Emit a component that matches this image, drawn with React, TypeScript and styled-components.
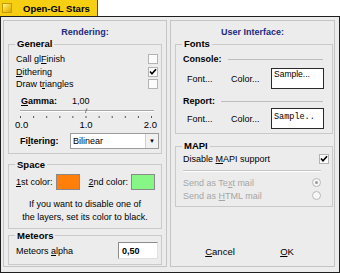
import styled, { createGlobalStyle } from "styled-components";

const GlobalStyle = createGlobalStyle`
  html, body { margin: 0; padding: 0; background: #fff; }
  body {
    font-family: "Liberation Sans", Arial, sans-serif;
    font-size: 9px;
    color: #000;
  }
  * { box-sizing: border-box; }
`;

const Window = styled.div`
  width: 340px;
  height: 273px;
  display: flex;
  flex-direction: column;
`;

const TabStrip = styled.div`
  height: 17px;
  display: flex;
  background: #fff;
  border-bottom: 1px solid #1f1f1f;
`;

const Tab = styled.div`
  width: 98px;
  background: #f6cf12;
  border-right: 1px solid #5c4c00;
  display: flex;
  align-items: center;
  gap: 11px;
  padding-left: 2px;
  font-weight: 700;
  font-size: 9.5px;
`;

const TabIcon = styled.span`
  width: 10px;
  height: 10px;
  background: linear-gradient(135deg, #fff6b0 0%, #f5d22a 45%, #d9a800 100%);
  border: 1px solid #c89a00;
`;

const Frame = styled.div`
  flex: 1;
  background: #ececec;
  border: 1px solid #1f1f1f;
  border-top: none;
  padding: 3px 4px 5px 2px;
  display: grid;
  grid-template-columns: 164px 165px;
  column-gap: 3px;
`;

const Panel = styled.div`
  border: 1px solid #c4c4c4;
  display: flex;
  flex-direction: column;
`;

const PanelTitle = styled.div`
  margin-top: 5px;
  height: 12px;
  line-height: 12px;
  text-align: center;
  font-weight: 700;
  color: #1d2a80;
`;

const Group = styled.fieldset<{ $top?: number; $right?: number }>`
  margin: ${(p) => p.$top ?? 0}px ${(p) => p.$right ?? 4}px 0 4px;
  padding: 0 2px 4px 7px;
  border: 1px solid #c9c9c9;
  min-width: 0;
`;

const Legend = styled.legend`
  padding: 0 2px;
  margin-left: -1px;
  font-weight: 700;
  font-size: 9.5px;
  line-height: 12px;
`;

const Row = styled.div<{ $h?: number }>`
  height: ${(p) => p.$h ?? 12.5}px;
  display: flex;
  align-items: center;
  justify-content: space-between;
  white-space: nowrap;
`;

const Box = styled.span`
  width: 10px;
  height: 10px;
  background: #fbfbfb;
  border: 1px solid #b3b3b3;
  display: inline-flex;
  align-items: center;
  justify-content: center;
  margin-right: 1px;
`;

const Check = ({ on }: { on?: boolean }) => (
  <Box>
    {on && (
      <svg width="8" height="8" viewBox="0 0 8 8">
        <path d="M1 3.5 L3 5.8 L7 1.2" stroke="#000" strokeWidth="1.6" fill="none" />
      </svg>
    )}
  </Box>
);

const GammaRow = styled.div`
  margin-top: 4px;
  padding-left: 5px;
  height: 12px;
  display: flex;
  align-items: center;
  gap: 15px;
  font-weight: 700;
`;

const Value = styled.span`
  font-weight: 400;
`;

const SliderArt = styled.svg`
  display: block;
  margin: 1px 0 0 4px;
`;

const ScaleLabels = styled.div`
  display: flex;
  justify-content: space-between;
  padding-right: 2px;
  margin-left: -1px;
  height: 11px;
  line-height: 11px;
  font-size: 9.5px;
`;

const FilterRow = styled.div`
  margin-top: 3px;
  padding-left: 4px;
  display: flex;
  align-items: center;
  justify-content: space-between;
  font-weight: 700;
`;

const Select = styled.div`
  width: 89px;
  height: 16px;
  background: #fff;
  border: 1px solid #9c9c9c;
  display: flex;
  align-items: center;
  justify-content: space-between;
  padding-left: 2px;
  font-weight: 400;
`;

const SelectButton = styled.span`
  width: 13px;
  height: 14px;
  background: #f1f1f1;
  border-left: 1px solid #d0d0d0;
  display: flex;
  align-items: center;
  justify-content: center;
  font-size: 6px;
`;

const ColorRow = styled.div`
  margin-top: 3px;
  display: flex;
  align-items: center;
  height: 16px;
  white-space: nowrap;
`;

const Swatch = styled.span<{ $color: string; $last?: boolean }>`
  flex-shrink: 0;
  width: 24px;
  height: 16px;
  background: ${(p) => p.$color};
  border: 1px solid #8a8a8a;
  margin: 0 ${(p) => (p.$last ? 0 : 9)}px 0 3px;
`;

const Note = styled.div`
  margin-top: 8px;
  text-align: center;
  line-height: 13px;
  padding-right: 5px;
`;

const AlphaInput = styled.span`
  width: 40px;
  height: 17px;
  background: #fff;
  border: 1px solid #8c8c8c;
  border-right-color: #e0e0e0;
  border-bottom-color: #e0e0e0;
  display: flex;
  align-items: center;
  padding-left: 3px;
  font-weight: 700;
  margin-right: 1px;
`;

const SubHeading = styled.div`
  height: 12px;
  display: flex;
  align-items: center;
  gap: 6px;
  font-weight: 700;
  padding-right: 7px;
  &::after {
    content: "";
    flex: 1;
    border-top: 1px solid #bdbdbd;
    margin-top: 1px;
  }
`;

const FontRow = styled.div<{ $top: number }>`
  margin-top: ${(p) => p.$top}px;
  height: 21px;
  display: flex;
  align-items: center;
  padding-left: 4px;
`;

const FontLink = styled.span<{ $w: number }>`
  width: ${(p) => p.$w}px;
`;

const Sample = styled.span<{ $mono?: boolean }>`
  width: 53px;
  height: 21px;
  background: #fff;
  border: 1px solid #2a2a2a;
  padding: 1px 0 0 2px;
  font-family: ${(p) => (p.$mono ? '"Liberation Mono", monospace' : '"Liberation Sans", Arial, sans-serif')};
  font-size: 8.5px;
  line-height: ${(p) => (p.$mono ? 14 : 9)}px;
  white-space: nowrap;
  overflow: hidden;
`;

const Separator = styled.div`
  margin: 4px 9px 4px 0;
  border-top: 1px solid #c4c4c4;
  border-bottom: 1px solid #fff;
`;

const Disabled = styled(Row)`
  color: #a6a6a6;
`;

const Radio = styled.span<{ $on?: boolean }>`
  width: 9px;
  height: 9px;
  border-radius: 50%;
  border: 1px solid #b8b8b8;
  background: #f7f7f7;
  margin-right: 9px;
  display: flex;
  align-items: center;
  justify-content: center;
  &::after {
    content: "";
    width: 3px;
    height: 3px;
    border-radius: 50%;
    background: ${(p) => (p.$on ? "#9a9a9a" : "transparent")};
  }
`;

const ButtonBar = styled.div`
  margin-top: auto;
  margin-bottom: 8px;
  display: flex;
  justify-content: flex-end;
  padding-right: 17px;
  gap: 7px;
`;

const Button = styled.button`
  width: 60px;
  height: 14px;
  padding: 0;
  background: transparent;
  border: none;
  font: inherit;
  font-size: 9.5px;
  color: #000;
`;

export default function App() {
  const ticks = Array.from({ length: 11 }, (_, i) => 1 + i * 13.1);
  return (
    <Window>
      <GlobalStyle />
      <TabStrip>
        <Tab>
          <TabIcon />
          Open-GL Stars
        </Tab>
      </TabStrip>
      <Frame>
        <Panel>
          <PanelTitle>Rendering:</PanelTitle>
          <Group>
            <Legend>General</Legend>
            <div style={{ height: 3 }} />
            <Row>
              <span>
                Call gl<u>F</u>inish
              </span>
              <Check />
            </Row>
            <Row>
              <span>
                <u>D</u>ithering
              </span>
              <Check on />
            </Row>
            <Row>
              <span>
                Draw t<u>r</u>iangles
              </span>
              <Check />
            </Row>
            <GammaRow>
              <span>
                <u>G</u>amma:
              </span>
              <Value>1,00</Value>
            </GammaRow>
            <SliderArt width="136" height="11" viewBox="0 0 136 11">
              <line x1="0.5" y1="2" x2="0.5" y2="4" stroke="#9a9a9a" />
              <line x1="133.5" y1="2" x2="133.5" y2="4" stroke="#9a9a9a" />
              <line x1="0" y1="2.5" x2="134" y2="2.5" stroke="#a8a8a8" />
              <line x1="0" y1="3.5" x2="134" y2="3.5" stroke="#fff" />
              <path d="M65.5 5 L66.5 1 L67.5 1" stroke="#777" fill="none" />
              {ticks.map((x) => (
                <rect key={x} x={x - 1} y={8} width={1} height={2} fill="#555" />
              ))}
            </SliderArt>
            <ScaleLabels>
              <span>0.0</span>
              <span>1.0</span>
              <span>2.0</span>
            </ScaleLabels>
            <FilterRow>
              <span>
                Fi<u>l</u>tering:
              </span>
              <Select>
                Bilinear
                <SelectButton>▼</SelectButton>
              </Select>
            </FilterRow>
          </Group>
          <Group $top={5}>
            <Legend>Space</Legend>
            <ColorRow>
              <span>
                <u>1</u>st color:
              </span>
              <Swatch $color="#ff7f0a" />
              <span>
                <u>2</u>nd color:
              </span>
              <Swatch $color="#86f786" $last />
            </ColorRow>
            <Note>
              If you want to disable one of
              <br />
              the layers, set its color to black.
            </Note>
          </Group>
          <Group $top={1}>
            <Legend>Meteors</Legend>
            <Row $h={18}>
              <span>
                Meteors <u>a</u>lpha
              </span>
              <AlphaInput>0,50</AlphaInput>
            </Row>
          </Group>
        </Panel>
        <Panel>
          <PanelTitle>User Interface:</PanelTitle>
          <Group $right={1}>
            <Legend>Fonts</Legend>
            <div style={{ height: 3 }} />
            <SubHeading>Console:</SubHeading>
            <FontRow $top={3}>
              <FontLink $w={44}>Font...</FontLink>
              <FontLink $w={40}>Color...</FontLink>
              <Sample>Sample...</Sample>
            </FontRow>
            <div style={{ height: 6 }} />
            <SubHeading>Report:</SubHeading>
            <FontRow $top={1}>
              <FontLink $w={44}>Font...</FontLink>
              <FontLink $w={40}>Color...</FontLink>
              <Sample $mono>Sample..</Sample>
            </FontRow>
          </Group>
          <Group $top={6} $right={1}>
            <Legend>MAPI</Legend>
            <Row $h={14}>
              <span>
                Disable <u>M</u>API support
              </span>
              <Check on />
            </Row>
            <Separator />
            <Disabled $h={13}>
              <span>
                Send as Te<u>x</u>t mail
              </span>
              <Radio $on />
            </Disabled>
            <Disabled $h={13}>
              <span>
                Send as <u>H</u>TML mail
              </span>
              <Radio />
            </Disabled>
          </Group>
          <ButtonBar>
            <Button>
              <u>C</u>ancel
            </Button>
            <Button>
              <u>O</u>K
            </Button>
          </ButtonBar>
        </Panel>
      </Frame>
    </Window>
  );
}
